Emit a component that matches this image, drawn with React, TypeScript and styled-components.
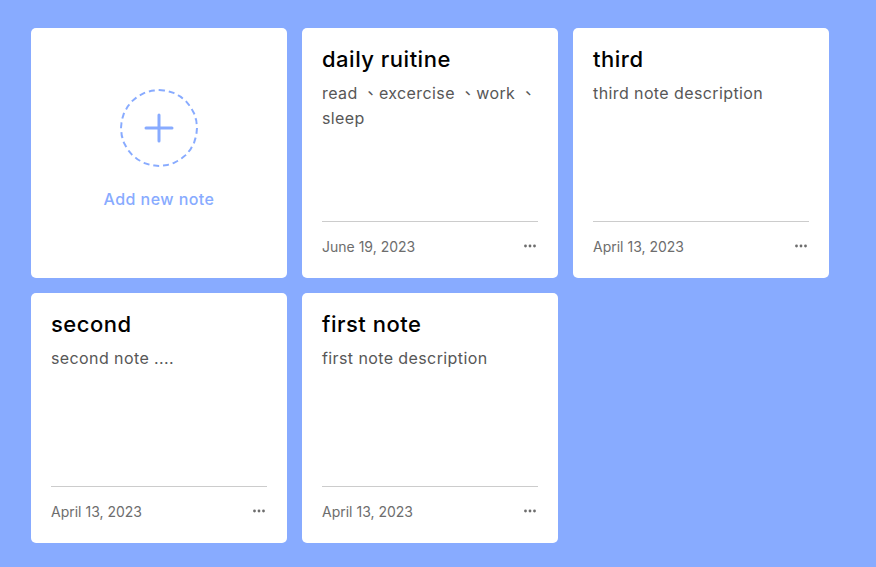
import React, { FC } from 'react'
import styled, { createGlobalStyle } from 'styled-components'

type Note = { title: string; description: string; date: string }

const ACCENT = '#88abff'

const notes: Note[] = [
  {
    title: 'daily ruitine',
    description: 'read 、excercise 、work 、sleep',
    date: 'June 19, 2023'
  },
  { title: 'third', description: 'third note description', date: 'April 13, 2023' },
  { title: 'second', description: 'second note ....', date: 'April 13, 2023' },
  { title: 'first note', description: 'first note description', date: 'April 13, 2023' }
]

const GlobalStyle = createGlobalStyle`
  * {
    margin: 0;
    padding: 0;
    box-sizing: border-box;
  }
  body {
    background: ${ACCENT};
    font-family: Inter, 'Noto Sans CJK TC', sans-serif;
  }
`

const Wrapper = styled.ul`
  list-style: none;
  display: grid;
  grid-template-columns: repeat(3, 256px);
  gap: 15px;
  padding: 28px 31px;
`

const Card = styled.li`
  height: 250px;
  background: #fff;
  border-radius: 5px;
  display: flex;
  flex-direction: column;
`

const AddCard = styled(Card)`
  align-items: center;
  justify-content: center;
  cursor: pointer;
`

const AddIcon = styled.div`
  width: 78px;
  height: 78px;
  border: 2px dashed ${ACCENT};
  border-radius: 50%;
  display: flex;
  align-items: center;
  justify-content: center;
  margin-top: -9px;
`

const AddLabel = styled.p`
  color: ${ACCENT};
  font-weight: 500;
  font-size: 16px;
  letter-spacing: 0.45px;
  margin-top: 22px;
`

const Details = styled.div`
  flex: 1;
  padding: 15px 20px 0;
`

const Title = styled.p`
  font-size: 22px;
  line-height: 33px;
  font-weight: 500;
  letter-spacing: 0.5px;
  color: #000;
`

const Description = styled.span`
  display: block;
  margin-top: 5px;
  font-size: 16px;
  line-height: 25px;
  letter-spacing: 0.4px;
  color: #575757;
`

const Footer = styled.div`
  margin: 0 20px;
  padding: 14px 0 21px;
  border-top: 1px solid #ccc;
  display: flex;
  align-items: center;
  justify-content: space-between;
`

const DateText = styled.span`
  font-size: 14px;
  line-height: 21px;
  color: #6d6d6d;
`

const Settings = styled.button`
  border: none;
  background: none;
  display: flex;
  padding: 0 2px;
  margin-top: -2px;
  cursor: pointer;
`

const PlusIcon: FC = () => (
  <svg width="30" height="30" viewBox="0 0 30 30">
    <path d="M15 2v26M2 15h26" stroke={ACCENT} strokeWidth="3" strokeLinecap="round" />
  </svg>
)

const DotsIcon: FC = () => (
  <svg width="12" height="4" viewBox="0 0 12 4">
    {[1.5, 6, 10.5].map((cx) => (
      <circle key={cx} cx={cx} cy="2" r="1.4" fill="#6d6d6d" />
    ))}
  </svg>
)

const NoteCard: FC<{ note: Note }> = ({ note }) => (
  <Card>
    <Details>
      <Title>{note.title}</Title>
      <Description>{note.description}</Description>
    </Details>
    <Footer>
      <DateText>{note.date}</DateText>
      <Settings aria-label="settings">
        <DotsIcon />
      </Settings>
    </Footer>
  </Card>
)

export default function App() {
  return (
    <>
      <GlobalStyle />
      <Wrapper>
        <AddCard>
          <AddIcon>
            <PlusIcon />
          </AddIcon>
          <AddLabel>Add new note</AddLabel>
        </AddCard>
        {notes.map((note) => (
          <NoteCard key={note.title} note={note} />
        ))}
      </Wrapper>
    </>
  )
}
